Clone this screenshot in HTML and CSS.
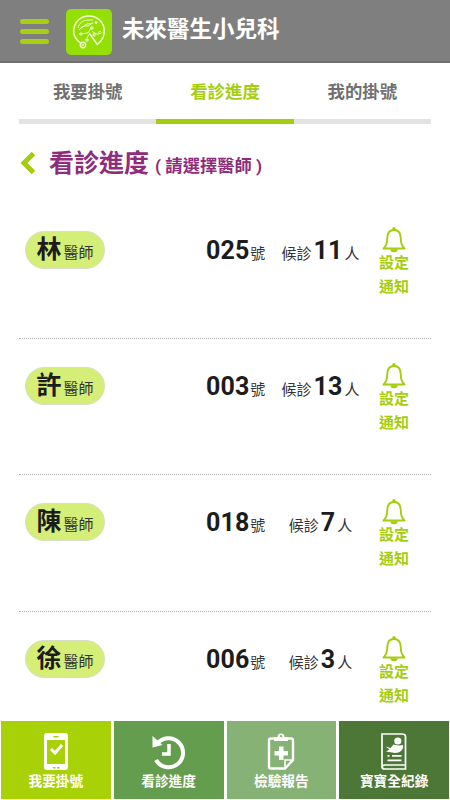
FILE: index.html
```html
<!DOCTYPE html>
<html lang="zh-Hant">
<head>
  <meta charset="UTF-8">
  <meta name="viewport" content="width=device-width, initial-scale=1.0">
  <title>看診進度</title>
  <link rel="stylesheet" href="styles.css">
</head>
<body>
  <svg class="symbols">
    <symbol id="bell" viewBox="0 0 24 26">
      <path d="M12 3C7.500 3 5.400 6.200 5.300 11c-.1 5.200-1 8-3.800 10.500h21C19.700 19 18.800 16.200 18.700 11 18.600 6.200 16.500 3 12 3z" fill="none" stroke="currentColor" stroke-width="1.900" stroke-linejoin="round"/>
      <path d="M10.300 3V1.800a1.700 1.700 0 0 1 3.400 0V3zM8.300 22.300h7.400a3.700 3 0 0 1-7.400 0z" fill="currentColor"/>
    </symbol>
  </svg>

  <header class="header">
    <div class="menu"><span></span><span></span><span></span></div>
    <svg class="logo" viewBox="0 0 46 46" fill="none" stroke="#f4ffd5">
      <rect width="46" height="46" rx="5" fill="#94df05" stroke="none"/>
      <path d="M15 34.500C10 31 7.500 27 7.700 22 8 13 14.500 7 23 7s15.300 6.500 15.300 15c0 5-2.300 10-7 13.500L23.500 24.500" stroke-width="1.400"/>
      <path d="M12 19c1-5 5-8 11-8h4M13 21c3-4 5-4 9-4l5-3M13 25l9-1 3-5M14 20l7-5 6-1M26 22l4 3h3M24 24l-3 5" stroke-width=".9"/>
      <circle cx="17" cy="36" r="2.700" stroke-width="1.400"/>
      <circle cx="17" cy="36" r=".8" stroke-width=".8"/>
      <circle cx="30" cy="13.500" r="1" fill="#f4ffd5"/>
      <circle cx="26" cy="19" r="1.200"/>
      <circle cx="34" cy="23.500" r="1.200"/>
      <circle cx="28" cy="26" r="1.200"/>
      <circle cx="21" cy="31" r="1.200"/>
      <circle cx="15" cy="25" r="1.100"/>
    </svg>
    <div class="app-name">未來醫生小兒科</div>
  </header>

  <nav class="tabs">
    <div class="tab">我要掛號</div>
    <div class="tab active">看診進度</div>
    <div class="tab">我的掛號</div>
  </nav>

  <div class="page-title">
    <svg class="back" viewBox="0 0 16 24"><path d="M13.500 2.500L4 12l9.500 9.500" fill="none" stroke="#a5cd10" stroke-width="5"/></svg>
    <h1>看診進度</h1>
    <span class="hint">( 請選擇醫師 )</span>
  </div>

  <main class="list">
    <div class="row">
      <div class="doctor"><b>林</b><span>醫師</span></div>
      <div class="number"><b>025</b><span>號</span></div>
      <div class="waiting"><span>候診</span><b>11</b><span>人</span></div>
      <div class="notify"><svg><use href="#bell"/></svg><span>設定</span><span>通知</span></div>
    </div>
    <div class="row">
      <div class="doctor"><b>許</b><span>醫師</span></div>
      <div class="number"><b>003</b><span>號</span></div>
      <div class="waiting"><span>候診</span><b>13</b><span>人</span></div>
      <div class="notify"><svg><use href="#bell"/></svg><span>設定</span><span>通知</span></div>
    </div>
    <div class="row">
      <div class="doctor"><b>陳</b><span>醫師</span></div>
      <div class="number"><b>018</b><span>號</span></div>
      <div class="waiting"><span>候診</span><b>7</b><span>人</span></div>
      <div class="notify"><svg><use href="#bell"/></svg><span>設定</span><span>通知</span></div>
    </div>
    <div class="row">
      <div class="doctor"><b>徐</b><span>醫師</span></div>
      <div class="number"><b>006</b><span>號</span></div>
      <div class="waiting"><span>候診</span><b>3</b><span>人</span></div>
      <div class="notify"><svg><use href="#bell"/></svg><span>設定</span><span>通知</span></div>
    </div>
  </main>

  <footer class="bottom-nav">
    <div class="nav-item register">
      <svg viewBox="0 0 38 38">
        <path d="M10 0h18q3 0 3 3v31q0 3-3 3H10q-3 0-3-3V3q0-3 3-3zM10 7v24h18V7zM16.500 3v1.500h5V3zM16 34v1.500h2.500V34zm4 0v1.500h2.500V34z" fill="#fff" fill-rule="evenodd"/>
        <path d="M14 16l4 4 7-8" fill="none" stroke="#fff" stroke-width="3"/>
      </svg>
      <span>我要掛號</span>
    </div>
    <div class="nav-item progress">
      <svg viewBox="0 0 38 38">
        <path d="M7 11A14.500 14.500 0 1 1 6 27" fill="none" stroke="#fff" stroke-width="4"/>
        <path d="M2.500 3l10 9-10 2.500z" fill="#fff"/>
        <path d="M19 11v10h-7" fill="none" stroke="#fff" stroke-width="3.500"/>
      </svg>
      <span>看診進度</span>
    </div>
    <div class="nav-item report">
      <svg viewBox="0 0 38 38">
        <path d="M23 35.500H9q-2 0-2-2V7.500q0-2 2-2h20q2 0 2 2V27z" fill="none" stroke="#fff" stroke-width="2.400"/>
        <path d="M12 4h3.500a3.500 3.500 0 0 1 7 0H26v4H12zM19 2a1.300 1.300 0 1 0 0 2.600A1.300 1.300 0 0 0 19 2z" fill="#fff" fill-rule="evenodd"/>
        <path d="M17 13.500h4.500V18H26v4.500h-4.500V27H17v-4.500h-4.500V18H17z" fill="#fff"/>
        <path d="M23 36v-9h8" fill="none" stroke="#fff" stroke-width="1.600"/>
      </svg>
      <span>檢驗報告</span>
    </div>
    <div class="nav-item record">
      <svg viewBox="0 0 38 38" fill="none" stroke="#fff" stroke-width="1.700">
        <path d="M27 1H7v33q0 2 3 2h20.500V3.500Q30.500 1 27 1zM7 34.500q0-2.500 3-2.500h20.500"/>
        <circle cx="22.800" cy="8" r="3.600" fill="#fff" stroke="none"/>
        <path d="M10.500 13.500l5 1.500 3-3.500q6 1.500 9.500.5c1 4.500-3 8-8 8l-9-1.500 3.500-2z" fill="#fff" stroke="none"/>
        <path d="M17 22.800h9.500M12.500 22.800h2M12.500 27.300h14"/>
      </svg>
      <span>寶寶全紀錄</span>
    </div>
  </footer>
</body>
</html>
```
FILE: styles.css
```css
* {
  box-sizing: border-box;
}
body {
  margin: 0;
  height: 800px;
  overflow: hidden;
  display: flex;
  flex-direction: column;
  background: #fff;
  color: #1c1c1c;
  font-family: Roboto, "Noto Sans CJK TC", sans-serif;
}
.symbols {
  display: none;
}
.header {
  flex: none;
  height: 63px;
  display: flex;
  align-items: center;
  padding: 0 20px;
  background: #7f7f7f;
  border-bottom: 2px solid #6f6f6f;
}
.menu {
  width: 29px;
  margin-top: 1px;
  display: flex;
  flex-direction: column;
  gap: 5px;
}
.menu span {
  height: 5px;
  border-radius: 3px;
  background: #a8cf13;
}
.logo {
  width: 46px;
  height: 46px;
  margin: 3px 10px 0 17px;
}
.app-name {
  color: #fff;
  font-size: 22.5px;
  font-weight: 700;
  line-height: 30px;
  margin-bottom: 3px;
}
.tabs {
  flex: none;
  height: 61px;
  display: flex;
  margin: 0 19px;
}
.tab {
  flex: 1;
  text-align: center;
  font-size: 17.4px;
  font-weight: 700;
  line-height: 58px;
  color: #707070;
  border-bottom: 5px solid #e3e3e3;
}
.tab.active {
  color: #a5cd10;
  border-color: #a5cd10;
}
.page-title {
  flex: none;
  height: 79px;
  display: flex;
  align-items: baseline;
  padding: 21px 0 0 20px;
  color: #8d2d7b;
}
.back {
  width: 16px;
  height: 24px;
  margin-right: 13px;
  align-self: flex-start;
  margin-top: 6px;
}
h1 {
  margin: 0;
  font-size: 25px;
  font-weight: 700;
  line-height: 38px;
}
.hint {
  margin-left: 6px;
  font-size: 17.3px;
  font-weight: 700;
}
.list {
  flex: 1;
  min-height: 0;
  overflow: hidden;
  padding: 0 19px;
}
.row {
  height: 136.2px;
  display: grid;
  grid-template-columns: 187px 66px 97px 50px;
  align-items: start;
  padding-top: 24px;
  border-bottom: 1px dotted #b0b0b0;
}
.row span {
  font-weight: 400;
  color: #333;
}
.row b {
  font-size: 25px;
  font-weight: 700;
  line-height: 36px;
}
.doctor {
  width: 80px;
  height: 38px;
  margin: 4px 0 0 6px;
  display: flex;
  justify-content: center;
  align-items: baseline;
  gap: 2px;
  border: 1px solid #d9dec8;
  border-radius: 19px;
  background: #d5ee77;
  font-size: 15px;
}
.number, .waiting {
  display: flex;
  align-items: baseline;
  gap: 1px;
  padding-top: 6px;
  font-size: 15px;
}
.number b, .waiting b {
  letter-spacing: 0.1px;
}
.waiting {
  justify-content: center;
}
.waiting b {
  margin: 0 1px;
}
.notify {
  display: flex;
  flex-direction: column;
  align-items: center;
}
.notify svg {
  width: 24px;
  height: 26px;
  margin-bottom: -2px;
  color: #a5cd10;
}
.notify span {
  color: #a5cd10;
  font-size: 15px;
  font-weight: 700;
  line-height: 24px;
}
.bottom-nav {
  flex: none;
  height: 79px;
  display: grid;
  grid-template-columns: repeat(4, 1fr);
  gap: 3px;
  padding: 0 1px 1px;
}
.nav-item {
  display: flex;
  flex-direction: column;
  align-items: center;
  padding-top: 12px;
  color: #fff;
  font-size: 13.7px;
  font-weight: 700;
  line-height: 20px;
}
.nav-item svg {
  width: 38px;
  height: 38px;
}
.register {
  background: #a8d108;
}
.progress {
  background: #659d4e;
}
.report {
  background: #87b276;
}
.record {
  background: #4c7737;
}
```
